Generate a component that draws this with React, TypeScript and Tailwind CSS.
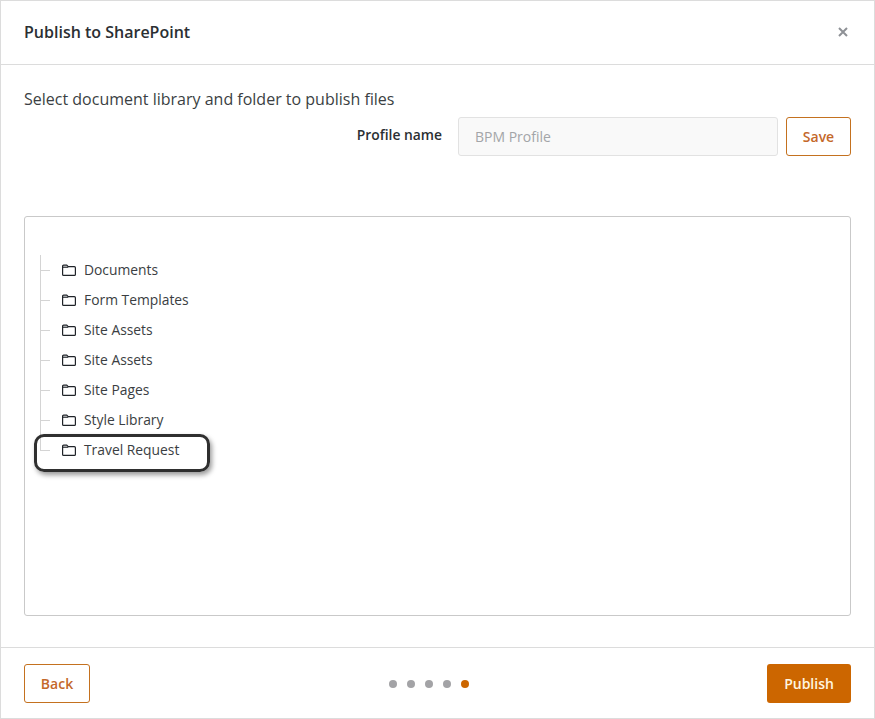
import React from "react";

const items = ["Documents", "Form Templates", "Site Assets", "Site Assets", "Site Pages", "Style Library", "Travel Request"];

function Folder() {
  return (
    <svg width="16" height="14" viewBox="0 0 16 14" fill="none" stroke="#1f2328" strokeWidth="1.2" className="shrink-0">
      <path d="M1.6 11.4V3.2c0-.6.4-1 1-1h3.2l1.4 1.5h6.2c.6 0 1 .4 1 1v6.700c0 .6-.4 1-1 1H2.600c-.6 0-1-.4-1-1z" strokeLinejoin="round" />
      <path d="M1.600 4.200h5.600" />
    </svg>
  );
}

export default function App() {
  return (
    <div className="w-[875px] h-[719px] bg-white border border-[#dcdcdc] flex flex-col font-['Open_Sans',sans-serif] text-[#32363a] overflow-hidden">
      <header className="h-[64px] shrink-0 border-b border-[#dcdcdc] flex items-center justify-between pl-[23px] pr-[26px] pb-[2px]">
        <h1 className="text-base font-[580] text-[#2b2f33] leading-[24px]">Publish to SharePoint</h1>
        <svg width="10" height="10" viewBox="0 0 10 10" stroke="#8e9196" strokeWidth="2" aria-label="close">
          <path d="M1 1l8 8M9 1l-8 8" />
        </svg>
      </header>

      <main className="flex-1 flex flex-col px-[23px] pt-[22px]">
        <p className="text-base leading-[24px] text-[#3b3f43]">Select document library and folder to publish files</p>
        <div className="flex justify-end items-start mt-[6px]">
          <label className="text-[13.85px] font-[560] leading-[20px] mt-[8px] mr-[16px] text-[#2b2f33]">Profile name</label>
          <input
            disabled
            placeholder="BPM Profile"
            className="w-[320px] h-[39px] bg-[#f9f9f9] border border-[#e2e2e2] rounded-[3px] px-4 text-sm placeholder:text-[#a3a5a8]"
          />
          <button className="ml-2 w-[65px] h-[39px] border border-[#c4711f] rounded-[3px] text-sm font-[560] text-[#c4682a] bg-white">Save</button>
        </div>

        <section className="relative mt-[60px] h-[400px] border border-[#c9c9c9] rounded-[3px] pl-[15px] pt-[38px]">
          <ul className="border-l border-[#d4d4d4] h-[196px]">
            {items.map((item, i) => (
              <li key={i} className="h-[30px] flex items-center text-[13.85px] text-[#3a3e42]">
                <span className="w-[9px] h-px bg-[#d4d4d4] mr-[11px]" />
                <Folder />
                <span className="ml-[7px]">{item}</span>
              </li>
            ))}
          </ul>
          <div className="absolute left-[9px] top-[217px] w-[176px] h-[38px] rounded-[10px] border-[3px] border-[#2f2f2f] shadow-[2px_3px_5px_rgba(0,0,0,0.4)]" />
        </section>
      </main>

      <footer className="h-[71px] shrink-0 border-t border-[#dcdcdc] flex items-center justify-between px-[23px]">
        <button className="w-[66px] h-[39px] pt-[1px] border border-[#c4711f] rounded-[3px] text-sm font-[560] text-[#c4682a] bg-white">Back</button>
        <div className="flex gap-[10px] items-center ml-[1px] mt-[1px]">
          <span className="w-2 h-2 rounded-full bg-[#a3a3a6]" />
          <span className="w-2 h-2 rounded-full bg-[#a3a3a6]" />
          <span className="w-2 h-2 rounded-full bg-[#a3a3a6]" />
          <span className="w-2 h-2 rounded-full bg-[#a3a3a6]" />
          <span className="w-2 h-2 rounded-full bg-[#cc6600]" />
        </div>
        <button className="w-[84px] h-[39px] pt-[1px] rounded-[3px] text-sm font-semibold text-[#fff6e0] bg-[#cc6600]">Publish</button>
      </footer>
    </div>
  );
}
